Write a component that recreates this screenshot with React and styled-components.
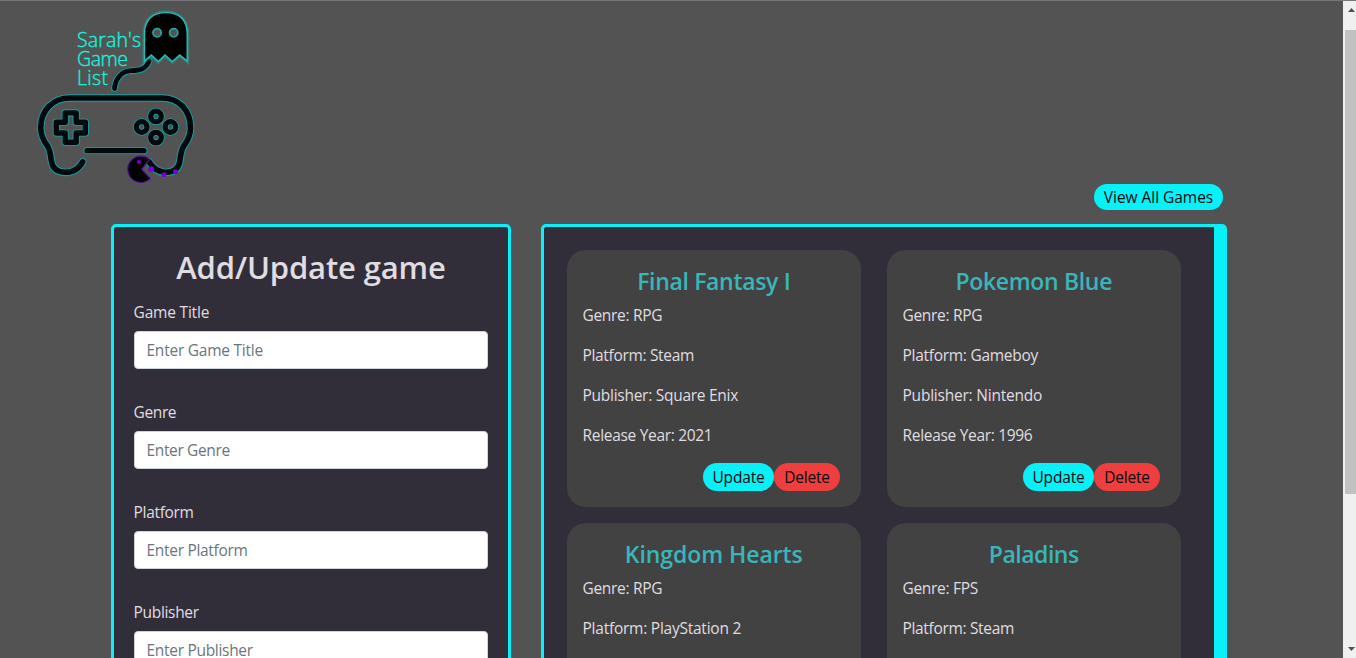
import React from "react";
import styled, { createGlobalStyle } from "styled-components";

const GlobalStyle = createGlobalStyle`
  * { box-sizing: border-box; }
  body {
    margin: 0;
    overflow: hidden;
    background: #535353;
    color: #e0dde0;
    font-family: "Open Sans", "Noto Sans", sans-serif;
    font-size: 15.5px;
    line-height: 24px;
  }
`;

const Window = styled.div`
  display: flex;
  height: 658px;
  border-top: 1px solid #77777b;
`;

const Page = styled.div`
  flex: 1;
  height: 657px;
  overflow: hidden;
`;

const Header = styled.header`
  height: 183px;
`;

const Logo = styled.svg`
  display: block;
`;

const LogoText = styled.text`
  font-family: "Open Sans", sans-serif;
  font-size: 19.5px;
  font-weight: 300;
  fill: #0ff5dc;
  stroke: #0ff5dc;
  stroke-width: 0.35px;
`;

const Toolbar = styled.div`
  display: flex;
  justify-content: flex-end;
  padding-right: 120px;
  height: 40px;
`;

const Pill = styled.button`
  width: ${(p) => p.$width}px;
  height: ${(p) => p.$height || 28}px;
  padding: 0;
  border: 0;
  border-radius: 14px;
  background: ${(p) => (p.$danger ? "#ef3e3e" : "#08f0f8")};
  color: #08080c;
  font: inherit;
  letter-spacing: ${(p) => p.$spacing || 0}px;
  white-space: nowrap;
`;

const Columns = styled.main`
  display: flex;
  align-items: flex-start;
  gap: 30px;
  padding-left: 111px;
`;

const Panel = styled.section`
  height: 700px;
  background: #312e39;
  border: 3px solid #08f0f8;
  border-radius: 5px;
`;

const FormPanel = styled(Panel)`
  width: 400px;
  padding: 21px 20px 0;
`;

const GamesPanel = styled(Panel)`
  display: grid;
  grid-template-columns: 294px 294px;
  grid-auto-rows: 257px;
  gap: 16px 26px;
  width: 686px;
  padding: 23px 0 0 23px;
  border-right-width: 13px;
`;

const Heading = styled.h2`
  margin: 0 0 14px;
  font-size: 31px;
  font-weight: 600;
  line-height: 38px;
  text-align: center;
  letter-spacing: -0.14px;
  white-space: nowrap;
`;

const Field = styled.div`
  height: 100px;
`;

const Label = styled.label`
  display: block;
  margin: 0 0 7px -0.4px;
  letter-spacing: ${(p) => p.$spacing}px;
`;

const Input = styled.input`
  display: block;
  width: 354px;
  height: 38px;
  padding: 0 11.5px;
  border: 1px solid #ced4da;
  border-radius: 4px;
  background: #fff;
  font: inherit;
  letter-spacing: ${(p) => p.$spacing}px;
  &::placeholder { color: #6c757d; opacity: 1; }
`;

const Card = styled.article`
  padding: 17px 16px 0 15.5px;
  border-radius: 19px;
  background: #424242;
`;

const CardTitle = styled.h3`
  margin: 0 0 7px;
  color: #3ab5b9;
  font-size: 23px;
  font-weight: 600;
  line-height: 29px;
  text-align: center;
  letter-spacing: ${(p) => p.$spacing}px;
`;

const Detail = styled.p`
  margin: 0 0 16px;
  letter-spacing: ${(p) => p.$spacing}px;
`;

const Actions = styled.div`
  display: flex;
  justify-content: flex-end;
  padding-right: 5px;
`;

const Scrollbar = styled.div`
  display: flex;
  flex-direction: column;
  width: 13px;
  height: 657px;
  padding-left: 2px;
  background: #f0f0f0;
`;

const Arrow = styled.svg`
  display: block;
  width: 11px;
  height: ${(p) => p.$height}px;
`;

const Thumb = styled.div`
  height: 464px;
  background: #c1c1c1;
`;

const Track = styled.div`
  flex: 1;
`;

const fields = [
  ["Game Title", -0.2, -0.24],
  ["Genre", -0.4, -0.36],
  ["Platform", -0.33, -0.3],
  ["Publisher", -0.33, -0.3],
];

const games = [
  { title: "Final Fantasy I", spacing: -0.33, details: [["Genre: RPG", -0.3], ["Platform: Steam", -0.33], ["Publisher: Square Enix", -0.27], ["Release Year: 2021", -0.31]] },
  { title: "Pokemon Blue", spacing: -0.33, details: [["Genre: RPG", -0.3], ["Platform: Gameboy", -0.28], ["Publisher: Nintendo", -0.22], ["Release Year: 1996", -0.31]] },
  { title: "Kingdom Hearts", spacing: -0.07, details: [["Genre: RPG", -0.3], ["Platform: PlayStation 2", -0.24]] },
  { title: "Paladins", spacing: -0.5, details: [["Genre: FPS", -0.3], ["Platform: Steam", -0.33]] },
];

const ghost = "M144.5 61V34C144.5 19.5 153 12.6 165.8 12.6S187.2 19.5 187.2 34V61L179.7 55L172.3 61.6L165 55L158.3 61.6L151.3 55Z";
const cable = "M149 61C146 69 140 70.5 131 70.7C121 71 115 80 114.5 88.5";
const body =
  "M82.7 161.7C79 169 74 172.3 65.5 172.3C56 172.3 52 167 51.2 160C50.4 153 50 150 47.5 146C43 140 40.7 135 40.7 128C40.7 110 53 98 70 98H161.7C179 98 190.5 110 190.5 128C190.5 135 188.2 140 183.7 146C181.2 150 180.8 153 180 160C179.2 167 175.5 172.3 166 172.3C158 172.3 153 169 149 161.7";
const pad = "M65.2 112.9H76.2V122.3H85.3V133H76.2V142.3H65.2V133H56.3V122.3H65.2Z";
const pellets = [[151.3, 169.2, 3], [164, 174.8, 2.5], [175.4, 171.7, 2.5]];
const padButtons = [[156, 116.4], [141.7, 127], [170.4, 127], [156, 137.6]];

function Outlined({ d, width }) {
  return (
    <g fill="none" strokeLinecap="round" strokeLinejoin="round">
      <path d={d} stroke="#12a7b4" strokeOpacity=".35" strokeWidth={width + 2.6} />
      <path d={d} stroke="#11a9b5" strokeWidth={width + 1.2} />
      <path d={d} stroke="#02090b" strokeWidth={width} />
    </g>
  );
}

function SiteLogo() {
  return (
    <Logo width="200" height="183" viewBox="0 1 200 183">
      <Outlined d={cable} width={4.8} />
      <path d={ghost} fill="none" stroke="#12c5bd" strokeOpacity=".35" strokeWidth="4" />
      <path d={ghost} fill="#000" stroke="#1fc0b8" strokeWidth="1.4" />
      <circle cx="157.1" cy="32.8" r="4.1" fill="#535353" stroke="#1fa59f" strokeWidth="1.8" />
      <circle cx="173.7" cy="32.8" r="4.1" fill="#535353" stroke="#1fa59f" strokeWidth="1.8" />
      <LogoText x="77" y="47" textLength="64">Sarah's</LogoText>
      <LogoText x="77" y="66" textLength="51">Game</LogoText>
      <LogoText x="77" y="85" textLength="31">List</LogoText>
      <Outlined d={body} width={5.6} />
      <Outlined d={pad} width={5.4} />
      <Outlined d="M87 150.7H144" width={5.2} />
      {padButtons.map(([x, y]) => (
        <g key={`${x}-${y}`} fill="none">
          <circle cx={x} cy={y} r="5.3" stroke="#11a9b5" strokeWidth="6.7" />
          <circle cx={x} cy={y} r="5.3" stroke="#02090b" strokeWidth="5.3" />
        </g>
      ))}
      <path d="M141.7 169.2L149.6 159.3A13.2 13.2 0 1 0 150.3 178.6Z" fill="#000" stroke="#51148f" strokeWidth="1.2" />
      <circle cx="139" cy="162" r="2.1" fill="#7700d6" />
      {pellets.map(([x, y, r]) => (
        <circle key={x} cx={x} cy={y} r={r} fill="#7700d6" />
      ))}
    </Logo>
  );
}

export default function App() {
  return (
    <>
      <GlobalStyle />
      <Window>
        <Page>
          <Header><SiteLogo /></Header>
          <Toolbar>
            <Pill $width={129} $height={26} $spacing={-0.04}>View All Games</Pill>
          </Toolbar>
          <Columns>
            <FormPanel>
              <Heading>Add/Update game</Heading>
              {fields.map(([name, labelSpacing, inputSpacing]) => (
                <Field key={name}>
                  <Label $spacing={labelSpacing}>{name}</Label>
                  <Input placeholder={`Enter ${name}`} $spacing={inputSpacing} />
                </Field>
              ))}
            </FormPanel>
            <GamesPanel>
              {games.map((game) => (
                <Card key={game.title}>
                  <CardTitle $spacing={game.spacing}>{game.title}</CardTitle>
                  {game.details.map(([text, spacing]) => (
                    <Detail key={text} $spacing={spacing}>{text}</Detail>
                  ))}
                  {game.details.length === 4 && (
                    <Actions>
                      <Pill $width={71} $spacing={-0.17}>Update</Pill>
                      <Pill $width={66} $spacing={-0.2} $danger>Delete</Pill>
                    </Actions>
                  )}
                </Card>
              ))}
            </GamesPanel>
          </Columns>
        </Page>
        <Scrollbar>
          <Arrow $height={29} viewBox="0 0 11 29"><path d="M3 11L6.5 7L10 11Z" fill="#505050" /></Arrow>
          <Thumb />
          <Track />
          <Arrow $height={17} viewBox="0 0 11 17"><path d="M3 6L6.5 10L10 6Z" fill="#505050" /></Arrow>
        </Scrollbar>
      </Window>
    </>
  );
}
